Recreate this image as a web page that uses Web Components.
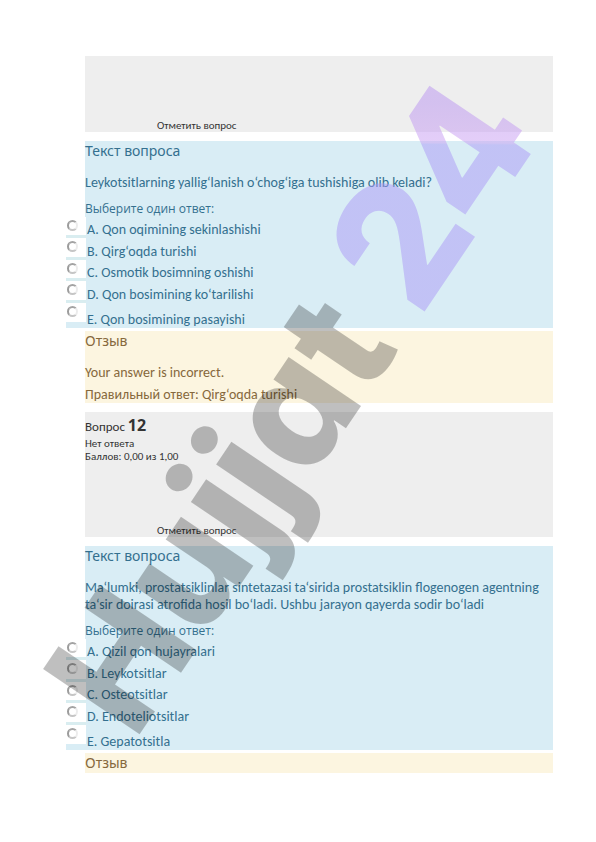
<!DOCTYPE html>
<html lang="ru">
<head>
<meta charset="utf-8">
<meta name="viewport" content="width=device-width, initial-scale=1">
<title>Hujjat 24</title>
<style>
  body { margin: 0; background: #fff; }
</style>
</head>
<body>
<quiz-page></quiz-page>

<template id="t-page">
  <style>
    :host {
      display: block; position: relative; box-sizing: border-box; min-height: 842px;
      padding: 56px 43px 70px 85px; background: #fff;
      font-family: Carlito, Lato, "Open Sans", sans-serif; font-size: 14px; line-height: 17px;
    }
    main { display: flex; flex-direction: column; gap: 9px; }
    .body { display: flex; flex-direction: column; gap: 3px; }
    p { margin: 0; }
  </style>
  <main>
    <question-info compact></question-info>
    <div class="body">
      <question-card prefix="q11"
        options="A. Qon oqimining sekinlashishi|B. Qirg‘oqda turishi|C. Osmotik bosimning oshishi|D. Qon bosimining ko‘tarilishi|E. Qon bosimining pasayishi">Leykotsitlarning yallig‘lanish o‘chog‘iga tushishiga olib keladi?</question-card>
      <feedback-card><p>Your answer is incorrect.</p><p>Правильный ответ: Qirg‘oqda turishi</p></feedback-card>
    </div>
    <question-info number="12"></question-info>
    <div class="body">
      <question-card prefix="q12"
        options="A. Qizil qon hujayralari|B. Leykotsitlar|C. Osteotsitlar|D. Endoteliotsitlar|E. Gepatotsitla">Ma‘lumki, prostatsiklinlar sintetazasi ta‘sirida prostatsiklin flogenogen agentning ta‘sir doirasi atrofida hosil bo‘ladi. Ushbu jarayon qayerda sodir bo‘ladi</question-card>
      <feedback-card brief></feedback-card>
    </div>
  </main>
  <page-watermark></page-watermark>
</template>

<template id="t-info">
  <style>
    :host {
      display: flex; flex-direction: column; box-sizing: border-box; min-height: 125px;
      padding-top: 4px; background: #eee; color: #333; font-family: Carlito, Lato, sans-serif; font-size: 11px; line-height: 13px;
    }
    :host([compact]) { min-height: 76px; }
    h3 { margin: 0 0 1px; font-weight: 400; font-size: 13px; line-height: 18px; }
    b { font: 700 16px/18px "Open Sans", sans-serif; }
    p { margin: 0; }
    button {
      align-self: flex-start; margin: auto 0 0 72px; padding: 0; border: 0; background: none;
      font: inherit; color: inherit; cursor: pointer;
    }
  </style>
  <div class="state"><h3>Вопрос <b></b></h3><p>Нет ответа</p><p>Баллов: 0,00 из 1,00</p></div>
  <button type="button">Отметить вопрос</button>
</template>

<template id="t-question">
  <style>
    :host { display: block; background: #d9edf5; color: #34708f; }
    h4 { margin: 0 0 13px; font: 400 14px/20px "Noto Sans", sans-serif; }
    p { margin: 0 12px 10px 0; }
    fieldset { margin: 0; padding: 0; border: 0; min-width: 0; }
    legend { padding: 0; font-size: 12px; line-height: 16px; font-family: "Open Sans", sans-serif; }
  </style>
  <h4>Текст вопроса</h4>
  <p><slot></slot></p>
  <fieldset><legend>Выберите один ответ:</legend><div class="list"></div></fieldset>
</template>

<template id="t-option">
  <style>
    :host {
      display: grid; grid-template-columns: 21px 1fr; height: 21px; margin-left: -19px;
    }
    :host(:nth-child(even)) { height: 22px; }
    :host(:last-child) { height: 25px; }
    .cell { box-sizing: border-box; background: #fff; border-bottom: 3px solid #d9edf0; padding: 3px 0 0 1px; margin-right: 1px; }
    :host(:last-child) .cell { border-bottom: 6px solid #d9edf5; }
    input {
      appearance: none; display: block; box-sizing: border-box; width: 11px; height: 11px; margin: 0;
      border: 2px solid; border-color: #a3a3a3 #ececec #c6c6c6 #9c9c9c; border-radius: 50%; background: #fff;
    }
    input:checked { background: #34708f; }
    label { align-self: end; line-height: 16px; }
  </style>
  <div class="cell"><input type="radio" id="choice"></div>
  <label for="choice"></label>
</template>

<template id="t-feedback">
  <style>
    :host { display: block; background: #fcf5e0; color: #86683c; }
    h4 { margin: 0; font: 400 14px/20px "Noto Sans", sans-serif; }
    .notes { display: flex; flex-direction: column; gap: 5px; margin-top: 13px; }
    :host([brief]) .notes { display: none; }
  </style>
  <h4>Отзыв</h4>
  <div class="notes"><slot></slot></div>
</template>

<template id="t-watermark">
  <style>
    :host { position: absolute; inset: 0; pointer-events: none; }
    svg { display: block; width: 100%; height: 100%; }
    text { font-family: Inter, sans-serif; font-weight: 800; font-feature-settings: "cv11"; }
  </style>
  <svg viewBox="0 0 596 842" aria-hidden="true">
    <defs>
      <linearGradient id="tint" gradientUnits="userSpaceOnUse" x1="0" y1="100" x2="0" y2="200"
        gradientTransform="rotate(56.4) translate(-140 -733)">
        <stop offset="0" stop-color="#b993f0"/>
        <stop offset=".4" stop-color="#c99df2"/>
        <stop offset=".42" stop-color="#ab98f6"/>
        <stop offset="1" stop-color="#ab98f6"/>
      </linearGradient>
    </defs>
    <g transform="translate(140 733) rotate(-56)">
      <text x="-10" y="0" font-size="160" fill="#000" fill-opacity=".25">Hujjat</text>
      <text x="500" y="0" font-size="168" fill="url(#tint)" fill-opacity=".5">24</text>
    </g>
  </svg>
</template>

<script>
  class TemplateElement extends HTMLElement {
    constructor() {
      super();
      const tpl = document.getElementById(this.constructor.template);
      this.attachShadow({ mode: "open" }).append(tpl.content.cloneNode(true));
    }
  }
  class AnswerOption extends TemplateElement {
    static template = "t-option";
    connectedCallback() {
      this.shadowRoot.querySelector("label").textContent = this.getAttribute("text");
      const input = this.shadowRoot.querySelector("input");
      input.name = this.getAttribute("group");
      input.addEventListener("change", () => {
        for (const other of this.parentNode.children)
          if (other !== this) other.shadowRoot.querySelector("input").checked = false;
      });
    }
  }
  class QuestionCard extends TemplateElement {
    static template = "t-question";
    connectedCallback() {
      const list = this.shadowRoot.querySelector(".list");
      list.replaceChildren(...this.getAttribute("options").split("|").map(text => {
        const option = document.createElement("answer-option");
        option.setAttribute("text", text);
        option.setAttribute("group", this.getAttribute("prefix"));
        return option;
      }));
    }
  }
  class QuestionInfo extends TemplateElement {
    static template = "t-info";
    connectedCallback() {
      const state = this.shadowRoot.querySelector(".state");
      if (!state) return;
      if (this.hasAttribute("compact")) state.remove();
      else state.querySelector("b").textContent = this.getAttribute("number");
    }
  }
  class FeedbackCard extends TemplateElement { static template = "t-feedback"; }
  class PageWatermark extends TemplateElement { static template = "t-watermark"; }
  class QuizPage extends TemplateElement { static template = "t-page"; }
  customElements.define("answer-option", AnswerOption);
  customElements.define("question-card", QuestionCard);
  customElements.define("question-info", QuestionInfo);
  customElements.define("feedback-card", FeedbackCard);
  customElements.define("page-watermark", PageWatermark);
  customElements.define("quiz-page", QuizPage);
</script>
</body>
</html>
